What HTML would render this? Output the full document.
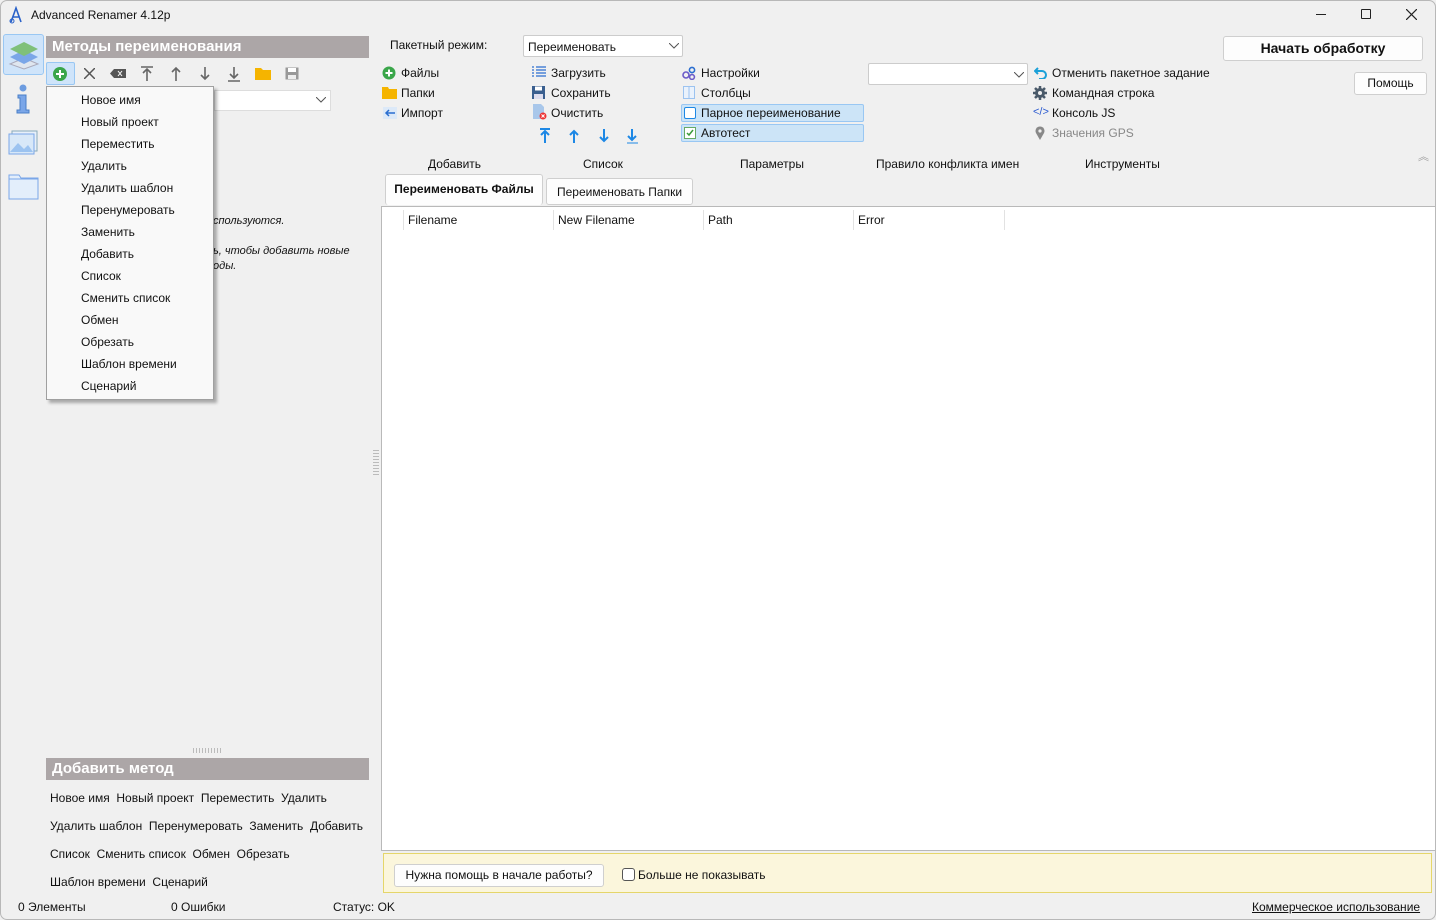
<!DOCTYPE html>
<html><head><meta charset="utf-8">
<style>
*{box-sizing:border-box;margin:0;padding:0}
body{width:1436px;height:920px;background:#f0f0f0;font-family:"Liberation Sans","Noto Sans CJK SC",sans-serif;font-size:12px;color:#111;position:relative;overflow:hidden}
.a{position:absolute;white-space:nowrap}
.win{position:absolute;left:0;top:0;width:1436px;height:920px;border:1px solid #b8b8b8;border-radius:7px}
.hdr{background:#aca6a7;color:#fff;font-weight:bold;font-size:15px;padding-left:6px;line-height:22px}
.mi{left:81px;font-size:12px}
.lnk{font-size:12px}
.col{top:210px;height:20px;border-right:1px solid #e2e2e2;line-height:20px;padding-left:4px}
.btn{background:#fdfdfd;border:1px solid #cfcfcf;border-radius:3px;text-align:center}
.ic{position:absolute}
</style></head><body>
<div class="win"></div>
<!-- title -->
<svg class="ic" style="left:8px;top:6px" width="16" height="18" viewBox="0 0 16 18"><path d="M3 16 L8 2 L13 16 M5 11 H11" stroke="#2a62c9" stroke-width="1.6" fill="none"/><circle cx="4" cy="15" r="2" stroke="#2a62c9" fill="none"/></svg>
<div class="a" style="left:31px;top:8px;font-size:12px">Advanced Renamer 4.12p</div>
<div class="a" style="left:1316px;top:14px;width:10px;height:1px;background:#222"></div>
<div class="a" style="left:1361px;top:9px;width:10px;height:10px;border:1px solid #222;border-radius:1px"></div>
<svg class="ic" style="left:1406px;top:9px" width="11" height="11"><path d="M0 0L11 11M11 0L0 11" stroke="#222" stroke-width="1.2"/></svg>

<!-- left sidebar -->
<div class="a" style="left:3px;top:34px;width:41px;height:41px;background:#cfe4fa;border:1px solid #99c7f3;border-radius:3px"></div>
<svg class="ic" style="left:8px;top:38px" width="32" height="32"><path d="M16 20 L30 26 L16 31 L2 26Z" fill="#dfe6ef" stroke="#aab"/><path d="M16 12 L30 19 L16 26 L2 19Z" fill="#7aa6e8"/><path d="M16 4 L30 11 L16 18 L2 11Z" fill="#7fc07a"/></svg>
<svg class="ic" style="left:14px;top:84px" width="18" height="30"><circle cx="9" cy="4" r="3.5" fill="#6d9ce0"/><path d="M4 11 H12 V26 H15 V29 H3 V26 H6 V14 H4Z" fill="#7aa6e8" stroke="#4a7fc8"/></svg>
<svg class="ic" style="left:8px;top:130px" width="30" height="26"><rect x="4" y="1" width="25" height="20" fill="#e8f0fa" stroke="#8ab"/><rect x="1" y="4" width="25" height="20" fill="#d8e8f8" stroke="#7aa6e8"/><path d="M2 22 L10 13 L16 19 L20 15 L25 22Z" fill="#9cc3f0"/></svg>
<svg class="ic" style="left:8px;top:174px" width="31" height="26"><path d="M1 1 H11 L13 4 H30 V25 H1Z" fill="#e3eefb" stroke="#7aa6e8"/><path d="M1 5 H30" stroke="#7aa6e8"/></svg>

<div class="a hdr" style="left:46px;top:36px;width:323px">Методы переименования</div>
<!-- toolbar -->
<div class="a" style="left:46px;top:62px;width:29px;height:23px;background:#cfe4fa;border:1px solid #99c7f3;border-radius:2px"></div>
<svg class="ic" style="left:52px;top:66px" width="16" height="16"><circle cx="8" cy="8" r="7" fill="#3aa64a"/><path d="M8 4V12M4 8H12" stroke="#fff" stroke-width="2"/></svg>
<svg class="ic" style="left:84px;top:68px" width="11" height="11"><path d="M0 0L11 11M11 0L0 11" stroke="#555" stroke-width="1.5"/></svg>
<svg class="ic" style="left:110px;top:69px" width="16" height="9"><path d="M4 0H16V9H4L0 4.5Z" fill="#555"/><path d="M8 2L12 7M12 2L8 7" stroke="#fff"/></svg>
<svg class="ic" style="left:140px;top:66px" width="14" height="15"><path d="M1 1H13M7 3V15M3 7L7 3L11 7" stroke="#666" stroke-width="1.6" fill="none"/></svg>
<svg class="ic" style="left:169px;top:66px" width="14" height="15"><path d="M7 2V15M3 6L7 2L11 6" stroke="#666" stroke-width="1.6" fill="none"/></svg>
<svg class="ic" style="left:198px;top:66px" width="14" height="15"><path d="M7 1V13M3 9L7 13L11 9" stroke="#666" stroke-width="1.6" fill="none"/></svg>
<svg class="ic" style="left:227px;top:66px" width="14" height="16"><path d="M7 1V12M3 8L7 12L11 8M1 15H13" stroke="#666" stroke-width="1.6" fill="none"/></svg>
<svg class="ic" style="left:255px;top:67px" width="16" height="13"><path d="M0 1H6L8 3H16V13H0Z" fill="#f5b400"/></svg>
<svg class="ic" style="left:285px;top:67px" width="14" height="13"><rect x="0.5" y="0.5" width="13" height="12" fill="#999"/><rect x="3" y="1" width="8" height="4" fill="#fff"/><rect x="3" y="8" width="8" height="4" fill="#eee"/></svg>

<div class="a" style="left:214px;top:90px;width:117px;height:21px;background:#fff;border:1px solid #ddd"></div>
<svg class="ic" style="left:316px;top:97px" width="10" height="6"><path d="M0 0L5 5L10 0" stroke="#555" fill="none"/></svg>
<div class="a" style="left:213px;top:215px;font-style:italic;font-size:11px">спользуются.</div>
<div class="a" style="left:213px;top:245px;font-style:italic;font-size:11px">ь, чтобы добавить новые</div>
<div class="a" style="left:213px;top:260px;font-style:italic;font-size:11px">оды.</div>

<!-- popup menu -->
<div class="a" style="left:46px;top:86px;width:168px;height:314px;background:#f9f9f9;border:1px solid #a0a0a0;box-shadow:3px 3px 3px rgba(0,0,0,.3)"></div>
<div class="a mi" style="top:93px">Новое имя</div>
<div class="a mi" style="top:115px">Новый проект</div>
<div class="a mi" style="top:137px">Переместить</div>
<div class="a mi" style="top:159px">Удалить</div>
<div class="a mi" style="top:181px">Удалить шаблон</div>
<div class="a mi" style="top:203px">Перенумеровать</div>
<div class="a mi" style="top:225px">Заменить</div>
<div class="a mi" style="top:247px">Добавить</div>
<div class="a mi" style="top:269px">Список</div>
<div class="a mi" style="top:291px">Сменить список</div>
<div class="a mi" style="top:313px">Обмен</div>
<div class="a mi" style="top:335px">Обрезать</div>
<div class="a mi" style="top:357px">Шаблон времени</div>
<div class="a mi" style="top:379px">Сценарий</div>

<div class="a" style="left:373px;top:450px;width:6px;height:26px;background:repeating-linear-gradient(#bbb 0 1px,transparent 1px 3px)"></div>
<div class="a" style="left:193px;top:748px;width:30px;height:5px;background:repeating-linear-gradient(90deg,#bbb 0 1px,transparent 1px 3px)"></div>

<div class="a hdr" style="left:46px;top:758px;width:323px">Добавить метод</div>
<div class="a lnk" style="left:50px;top:791px;word-spacing:0">Новое имя&nbsp; Новый проект&nbsp; Переместить&nbsp; Удалить</div>
<div class="a lnk" style="left:50px;top:819px">Удалить шаблон&nbsp; Перенумеровать&nbsp; Заменить&nbsp; Добавить</div>
<div class="a lnk" style="left:50px;top:847px">Список&nbsp; Сменить список&nbsp; Обмен&nbsp; Обрезать</div>
<div class="a lnk" style="left:50px;top:875px">Шаблон времени&nbsp; Сценарий</div>

<div class="a" style="left:18px;top:900px">0 Элементы</div>
<div class="a" style="left:171px;top:900px">0 Ошибки</div>
<div class="a" style="left:333px;top:900px">Статус: OK</div>
<div class="a" style="left:1252px;top:900px;text-decoration:underline">Коммерческое использование</div>

<!-- right top -->
<div class="a" style="left:390px;top:38px">Пакетный режим:</div>
<div class="a" style="left:523px;top:35px;width:160px;height:22px;background:#fff;border:1px solid #ccc;border-radius:2px;padding:4px 4px">Переименовать</div>
<svg class="ic" style="left:669px;top:43px" width="10" height="6"><path d="M0 0L5 5L10 0" stroke="#555" fill="none"/></svg>

<svg class="ic" style="left:382px;top:66px" width="14" height="14"><circle cx="7" cy="7" r="6.5" fill="#3aa64a"/><path d="M7 3.5V10.5M3.5 7H10.5" stroke="#fff" stroke-width="2"/></svg>
<div class="a" style="left:401px;top:66px">Файлы</div>
<svg class="ic" style="left:382px;top:87px" width="15" height="12"><path d="M0 0H6L7 2H15V12H0Z" fill="#f5b400"/></svg>
<div class="a" style="left:401px;top:86px">Папки</div>
<svg class="ic" style="left:383px;top:107px" width="14" height="12"><rect width="14" height="12" fill="#dce9f8"/><path d="M12 6H3M6 3L3 6L6 9" stroke="#2a6ed0" stroke-width="1.5" fill="none"/></svg>
<div class="a" style="left:401px;top:106px">Импорт</div>

<svg class="ic" style="left:532px;top:66px" width="14" height="13"><path d="M0 1H2M4 1H14M0 4H2M4 4H14M0 7H2M4 7H14M0 10H2M4 10H14" stroke="#2a6ed0" stroke-width="1.3"/></svg>
<div class="a" style="left:551px;top:66px">Загрузить</div>
<svg class="ic" style="left:532px;top:86px" width="13" height="13"><rect width="13" height="13" fill="#3a5f8f"/><rect x="3" y="0.5" width="7" height="4" fill="#fff"/><rect x="2" y="8" width="9" height="5" fill="#dde"/></svg>
<div class="a" style="left:551px;top:86px">Сохранить</div>
<svg class="ic" style="left:533px;top:104px" width="15" height="16"><path d="M0 0H8L11 3V15H0Z" fill="#a9c7ea"/><circle cx="10" cy="12" r="3.5" fill="#e33"/><path d="M8.5 10.5L11.5 13.5M11.5 10.5L8.5 13.5" stroke="#fff"/></svg>
<div class="a" style="left:551px;top:106px">Очистить</div>
<svg class="ic" style="left:539px;top:128px" width="102" height="16"><g stroke="#1e88e5" stroke-width="2" fill="none"><path d="M1 1H11M6 3V15M2 7L6 3L10 7"/><path d="M35 3V15M31 7L35 3L39 7"/><path d="M65 1V13M61 9L65 13L69 9"/><path d="M93 1V12M89 8L93 12L97 8"/></g><path d="M88 15H99" stroke="#1e88e5"/></svg>

<svg class="ic" style="left:682px;top:66px" width="14" height="14"><circle cx="4" cy="9" r="3" fill="none" stroke="#6b5bc8" stroke-width="1.6"/><circle cx="10" cy="4" r="2.6" fill="none" stroke="#2a6ed0" stroke-width="1.6"/><circle cx="10" cy="11" r="2.4" fill="none" stroke="#6b5bc8" stroke-width="1.6"/></svg>
<div class="a" style="left:701px;top:66px">Настройки</div>
<svg class="ic" style="left:683px;top:86px" width="12" height="13"><rect x=".5" y=".5" width="11" height="12" fill="#eaf2fc" stroke="#9cc3f0"/><path d="M6 1V12" stroke="#9cc3f0"/></svg>
<div class="a" style="left:701px;top:86px">Столбцы</div>
<div class="a" style="left:681px;top:104px;width:183px;height:18px;background:#cce4f7;border:1px solid #99c7f3;border-radius:2px"></div>
<div class="a" style="left:681px;top:124px;width:183px;height:18px;background:#cce4f7;border:1px solid #99c7f3;border-radius:2px"></div>
<div class="a" style="left:684px;top:107px;width:12px;height:12px;border:1.5px solid #1e88e5;background:#fff;border-radius:2px"></div>
<div class="a" style="left:701px;top:106px">Парное переименование</div>
<svg class="ic" style="left:684px;top:127px" width="12" height="12"><rect x=".5" y=".5" width="11" height="11" fill="#fff" stroke="#6a6"/><path d="M3 6L5 8L9 3" stroke="#3a9a3a" stroke-width="1.5" fill="none"/></svg>
<div class="a" style="left:701px;top:126px">Автотест</div>

<div class="a" style="left:868px;top:63px;width:160px;height:22px;background:#fff;border:1px solid #ccc;border-radius:2px"></div>
<svg class="ic" style="left:1014px;top:72px" width="10" height="6"><path d="M0 0L5 5L10 0" stroke="#555" fill="none"/></svg>
<svg class="ic" style="left:1034px;top:67px" width="13" height="12"><path d="M4 1L1 4L4 7M1 4H8A4 4 0 0 1 8 12H5" stroke="#1aa0d8" stroke-width="2" fill="none"/></svg>
<div class="a" style="left:1052px;top:66px">Отменить пакетное задание</div>
<svg class="ic" style="left:1033px;top:86px" width="14" height="14"><circle cx="7" cy="7" r="5" fill="#4a5a6a"/><path d="M7 0V14M0 7H14M2 2L12 12M12 2L2 12" stroke="#4a5a6a" stroke-width="2.5"/><circle cx="7" cy="7" r="2" fill="#f0f0f0"/></svg>
<div class="a" style="left:1052px;top:86px">Командная строка</div>
<div class="a" style="left:1033px;top:106px;color:#2a5ad0;font-size:11px">&lt;/&gt;</div>
<div class="a" style="left:1052px;top:106px">Консоль JS</div>
<svg class="ic" style="left:1035px;top:126px" width="10" height="14"><path d="M5 14L1 7A4.5 4.5 0 1 1 9 7Z" fill="#888"/><circle cx="5" cy="5" r="1.6" fill="#f0f0f0"/></svg>
<div class="a" style="left:1052px;top:126px;color:#888">Значения GPS</div>

<div class="a btn" style="left:1223px;top:36px;width:200px;height:25px;font-weight:bold;font-size:14px;line-height:23px">Начать обработку</div>
<div class="a btn" style="left:1354px;top:72px;width:73px;height:23px;line-height:21px">Помощь</div>
<div class="a" style="left:1418px;top:148px;color:#999;font-size:11px">︽</div>

<div class="a" style="left:428px;top:157px">Добавить</div>
<div class="a" style="left:583px;top:157px">Список</div>
<div class="a" style="left:740px;top:157px">Параметры</div>
<div class="a" style="left:876px;top:157px">Правило конфликта имен</div>
<div class="a" style="left:1085px;top:157px">Инструменты</div>

<div class="a btn" style="left:385px;top:174px;width:158px;height:31px;font-weight:bold;line-height:29px;border-bottom:none">Переименовать Файлы</div>
<div class="a btn" style="left:546px;top:178px;width:147px;height:27px;line-height:26px">Переименовать Папки</div>

<div class="a" style="left:381px;top:206px;width:1055px;height:645px;background:#fff;border:1px solid #b9b9b9"></div>
<div class="a" style="left:382px;top:210px;width:22px;height:20px;border-right:1px solid #e2e2e2"></div>
<div class="a col" style="left:404px;width:150px">Filename</div>
<div class="a col" style="left:554px;width:150px">New Filename</div>
<div class="a col" style="left:704px;width:150px">Path</div>
<div class="a col" style="left:854px;width:151px">Error</div>

<div class="a" style="left:383px;top:853px;width:1049px;height:40px;background:#fbf6dc;border:1px solid #e5d66a"></div>
<div class="a btn" style="left:394px;top:864px;width:210px;height:23px;line-height:21px">Нужна помощь в начале работы?</div>
<div class="a" style="left:622px;top:868px;width:13px;height:13px;border:1px solid #555;border-radius:3px;background:#fff"></div>
<div class="a" style="left:638px;top:868px">Больше не показывать</div>
</body></html>
